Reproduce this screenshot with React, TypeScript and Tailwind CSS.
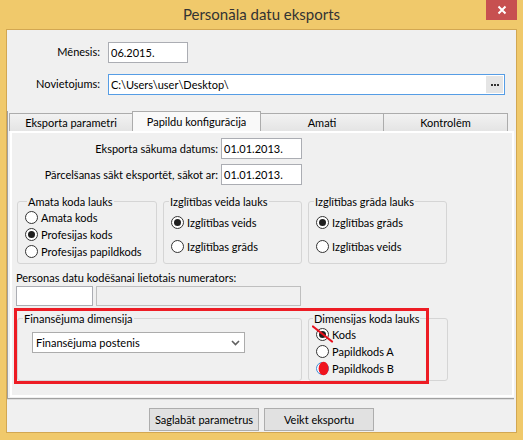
import React from "react";

function RadioDot({ checked, blue }: { checked?: boolean; blue?: boolean }) {
  return (
    <span
      className={`flex h-[13px] w-[13px] shrink-0 items-center justify-center rounded-full border bg-white ${
        blue ? "border-[#3c8ad6]" : "border-[#333333]"
      }`}
    >
      {checked && <span className="h-[7px] w-[7px] rounded-full bg-[#1f1f1f]" />}
    </span>
  );
}

function Radio({
  label,
  checked,
  blue,
  overlay,
}: {
  label: string;
  checked?: boolean;
  blue?: boolean;
  overlay?: React.ReactNode;
}) {
  return (
    <div className="flex h-[17px] items-center gap-[3px]">
      <span className="relative flex">
        <RadioDot checked={checked} blue={blue} />
        {overlay}
      </span>
      <span className="leading-[15px]">{label}</span>
    </div>
  );
}

function Group({
  title,
  className,
  legendClass,
  children,
}: {
  title: string;
  className: string;
  legendClass: string;
  children: React.ReactNode;
}) {
  return (
    <fieldset className={`h-[70px] min-w-0 rounded-[3px] border border-[#d5d5d5] ${className}`}>
      <legend className={`px-[1px] leading-[15px] ${legendClass}`}>{title}</legend>
      {children}
    </fieldset>
  );
}

function TextBox({ value, className }: { value: string; className: string }) {
  return (
    <div className={`flex items-center border border-[#abadb3] bg-white pl-[2px] leading-[15px] ${className}`}>
      {value}
    </div>
  );
}

export default function App() {
  return (
    <div className="h-[440px] w-[523px] overflow-hidden bg-[#f0c96b] font-['Lato','Noto_Sans',sans-serif] text-[11px] text-black">
      {/* Title bar */}
      <div className="flex h-[29px]">
        <div className="flex-1" />
        <div className="flex items-center pb-[1px] text-[15px] text-[#333333]">Personāla datu eksports</div>
        <div className="flex flex-1 justify-end">
          <div className="mr-[6px] flex h-[20px] w-[31px] items-center justify-center bg-[#c75050]">
            <svg width="10" height="10" viewBox="0 0 10 10">
              <path d="M1.5 1.5 L8.5 8.5 M8.5 1.5 L1.5 8.5" stroke="#ffffff" strokeWidth="2" />
            </svg>
          </div>
        </div>
      </div>

      {/* Client area */}
      <div className="mx-[6px] flex h-[404px] flex-col border border-[#d2a752] bg-[#f0f0f0]">
        {/* top fields */}
        <div className="grid grid-cols-[93px_auto] items-center gap-x-[8px] gap-y-[11px] pt-[12px]">
          <div className="text-right">Mēnesis:</div>
          <TextBox value="06.2015." className="h-[21px] w-[80px]" />
          <div className="text-right">Novietojums:</div>
          <div className="flex h-[21px] w-[397px] items-center border border-[#569de5] bg-white pl-[2px] pr-[1px]">
            <span className="flex-1 leading-[15px]">C:\Users\user\Desktop\</span>
            <span className="flex h-[17px] w-[17px] items-center justify-center gap-[1px] bg-[#e5e5e5]">
              <span className="h-[2px] w-[2px] bg-[#333333]" />
              <span className="h-[2px] w-[2px] bg-[#333333]" />
              <span className="h-[2px] w-[2px] bg-[#333333]" />
            </span>
          </div>
        </div>

        {/* Tab control */}
        <div className="mt-[16px] mr-[2px] border-b border-l border-[#a0a0a0] pb-[1px] pl-[1px]">
          <div className="flex h-[20px] items-end">
            <div className="flex h-[18px] w-[124px] items-center justify-center border border-b-0 border-[#acacac] bg-linear-to-b from-[#f2f2f2] to-[#e4e4e4] leading-[15px]">
              Eksporta parametri
            </div>
            <div className="-ml-px flex h-[20px] w-[129px] items-center justify-center border border-b-0 border-[#acacac] bg-[#f9f9f9] pb-[1px] leading-[15px]">
              Papildu konfigurācija
            </div>
            <div className="-ml-px flex h-[18px] w-[124px] items-center justify-center border border-b-0 border-[#acacac] bg-linear-to-b from-[#f2f2f2] to-[#e4e4e4] leading-[15px]">
              Amati
            </div>
            <div className="-ml-px flex h-[18px] w-[125px] items-center justify-center border border-b-0 border-[#acacac] bg-linear-to-b from-[#f2f2f2] to-[#e4e4e4] leading-[15px]">
              Kontrolēm
            </div>
          </div>

          {/* Panel */}
          <div className="relative ml-[1px] h-[266px] w-[504px] border-2 border-white bg-[#f0f0f0] pt-[5px]">
            <div className="grid grid-cols-[206px_81px] items-center gap-x-[3px] gap-y-[5px]">
              <div className="text-right leading-[15px]">Eksporta sākuma datums:</div>
              <TextBox value="01.01.2013." className="h-[21px] w-[81px]" />
              <div className="text-right leading-[15px]">Pārcelšanas sākt eksportēt, sākot ar:</div>
              <TextBox value="01.01.2013." className="h-[21px] w-[81px]" />
            </div>

            <div className="mt-[9px] ml-[5px] flex gap-[6px]">
              <Group title="Amata koda lauks" className="w-[140px] pl-[7px]" legendClass="ml-[2px]">
                <Radio label="Amata kods" />
                <Radio label="Profesijas kods" checked />
                <Radio label="Profesijas papildkods" />
              </Group>
              <Group title="Izglītības veida lauks" className="w-[139px] pl-[7px]" legendClass="-ml-[2px]">
                <div className="flex flex-col gap-[7px] pt-[5px]">
                  <Radio label="Izglītības veids" checked />
                  <Radio label="Izglītības grāds" />
                </div>
              </Group>
              <Group title="Izglītības grāda lauks" className="w-[139px] pl-[7px]" legendClass="-ml-[2px]">
                <div className="flex flex-col gap-[7px] pt-[5px]">
                  <Radio label="Izglītības grāds" checked />
                  <Radio label="Izglītības veids" />
                </div>
              </Group>
            </div>

            <div className="mt-[6px] ml-[4px] leading-[15px]">Personas datu kodēšanai lietotais numerators:</div>
            <div className="mt-[1px] ml-[4px] flex gap-[3px]">
              <div className="h-[20px] w-[77px] border border-[#abadb3] bg-white" />
              <div className="h-[20px] w-[205px] border border-[#bfbfbf] bg-[#f0f0f0]" />
            </div>

            <div className="mt-[5px] ml-[5px] flex gap-[6px]">
              <Group title="Finansējuma dimensija" className="w-[285px] pl-[14px]" legendClass="-ml-[9px]">
                <div className="mt-[6px] flex h-[21px] w-[213px] items-center justify-between border border-[#acacac] bg-white pr-[4px] pl-[3px]">
                  <span className="leading-[15px]">Finansējuma postenis</span>
                  <svg width="9" height="6" viewBox="0 0 9 6">
                    <path d="M1 1 L4.5 4.5 L8 1" stroke="#606060" strokeWidth="1.6" fill="none" />
                  </svg>
                </div>
              </Group>
              <Group title="Dimensijas koda lauks" className="w-[140px] pl-[7px]" legendClass="-ml-[3px]">
                <Radio
                  label="Kods"
                  checked
                  overlay={
                    <svg
                      className="pointer-events-none absolute -top-[3px] -left-[4px]"
                      width="22"
                      height="18"
                      viewBox="0 0 22 18"
                    >
                      <path d="M1 1.5 L20 16.5" stroke="#e8101c" strokeWidth="2.2" strokeLinecap="round" />
                    </svg>
                  }
                />
                <Radio label="Papildkods A" />
                <Radio
                  label="Papildkods B"
                  blue
                  overlay={
                    <svg
                      className="pointer-events-none absolute -top-[1px] left-0"
                      width="14"
                      height="15"
                      viewBox="0 0 14 15"
                    >
                      <ellipse cx="7.6" cy="7.5" rx="5" ry="6.8" fill="#f0141e" />
                    </svg>
                  }
                />
              </Group>
            </div>

            {/* red highlight annotation */}
            <div className="pointer-events-none absolute top-[175px] left-[2px] h-[76px] w-[415px] border-[3px] border-[#ed1c24]" />
          </div>
        </div>
        <div className="mr-[2px] h-[1px] bg-[#dcdcdc]" />

        {/* bottom buttons */}
        <div className="flex flex-1 justify-center gap-[5px] pt-[8px]">
          <div className="flex h-[23px] w-[110px] items-center justify-center border border-[#adadad] bg-[#e1e1e1] leading-[15px]">
            Saglabāt parametrus
          </div>
          <div className="flex h-[23px] w-[110px] items-center justify-center border border-[#adadad] bg-[#e1e1e1] leading-[15px]">
            Veikt eksportu
          </div>
        </div>
      </div>
    </div>
  );
}
